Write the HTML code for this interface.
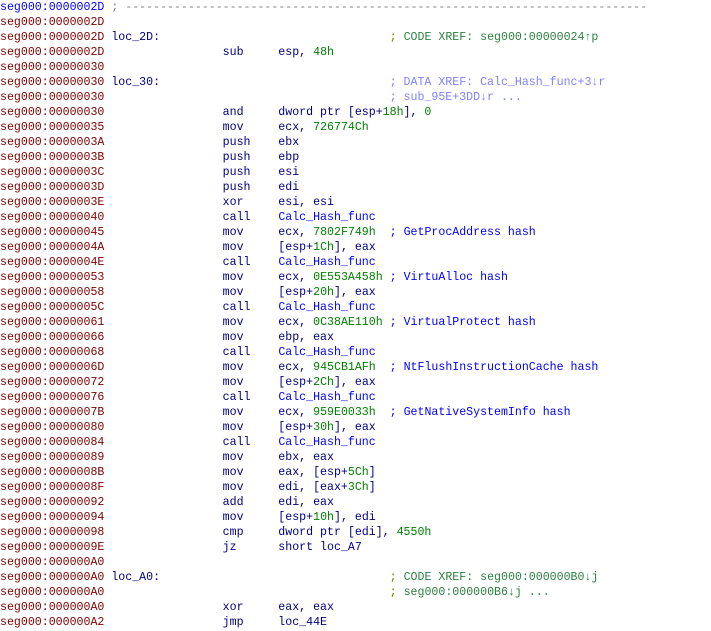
<!DOCTYPE html>
<html><head><meta charset="utf-8"><style>
html,body{margin:0;padding:0;background:#fff;width:711px;height:631px;overflow:hidden}
pre{margin:0;font-family:"Liberation Mono",monospace;font-size:11.6px;line-height:15px;color:#000080;white-space:pre}
.a{color:#800000}.b{color:#0000ff}.n{color:#008000}.f{color:#0000ff}.c{color:#2b8040}.sc{color:#808000}.d{color:#8080ff}.g{color:#808080}.l{color:#000080}
</style></head><body><pre><span class="b">seg000:0000002D</span> <span class="g">; ---------------------------------------------------------------------------</span>
<span class="a">seg000:0000002D</span>
<span class="a">seg000:0000002D</span> loc_2D:                                 <span class="sc">;</span> <span class="c">CODE XREF: seg000:00000024↑p</span>
<span class="a">seg000:0000002D</span>                 sub     esp, <span class="n">48h</span>
<span class="a">seg000:00000030</span>
<span class="a">seg000:00000030</span> loc_30:                                 <span class="d">; DATA XREF: Calc_Hash_func+3↓r</span>
<span class="a">seg000:00000030</span>                                         <span class="d">; sub_95E+3DD↓r ...</span>
<span class="a">seg000:00000030</span>                 and     dword ptr [esp+<span class="n">18h</span>], <span class="n">0</span>
<span class="a">seg000:00000035</span>                 mov     ecx, <span class="n">726774Ch</span>
<span class="a">seg000:0000003A</span>                 push    ebx
<span class="a">seg000:0000003B</span>                 push    ebp
<span class="a">seg000:0000003C</span>                 push    esi
<span class="a">seg000:0000003D</span>                 push    edi
<span class="a">seg000:0000003E</span>                 xor     esi, esi
<span class="a">seg000:00000040</span>                 call    <span class="f">Calc_Hash_func</span>
<span class="a">seg000:00000045</span>                 mov     ecx, <span class="n">7802F749h</span>  <span class="b">; GetProcAddress hash</span>
<span class="a">seg000:0000004A</span>                 mov     [esp+<span class="n">1Ch</span>], eax
<span class="a">seg000:0000004E</span>                 call    <span class="f">Calc_Hash_func</span>
<span class="a">seg000:00000053</span>                 mov     ecx, <span class="n">0E553A458h</span> <span class="b">; VirtuAlloc hash</span>
<span class="a">seg000:00000058</span>                 mov     [esp+<span class="n">20h</span>], eax
<span class="a">seg000:0000005C</span>                 call    <span class="f">Calc_Hash_func</span>
<span class="a">seg000:00000061</span>                 mov     ecx, <span class="n">0C38AE110h</span> <span class="b">; VirtualProtect hash</span>
<span class="a">seg000:00000066</span>                 mov     ebp, eax
<span class="a">seg000:00000068</span>                 call    <span class="f">Calc_Hash_func</span>
<span class="a">seg000:0000006D</span>                 mov     ecx, <span class="n">945CB1AFh</span>  <span class="b">; NtFlushInstructionCache hash</span>
<span class="a">seg000:00000072</span>                 mov     [esp+<span class="n">2Ch</span>], eax
<span class="a">seg000:00000076</span>                 call    <span class="f">Calc_Hash_func</span>
<span class="a">seg000:0000007B</span>                 mov     ecx, <span class="n">959E0033h</span>  <span class="b">; GetNativeSystemInfo hash</span>
<span class="a">seg000:00000080</span>                 mov     [esp+<span class="n">30h</span>], eax
<span class="a">seg000:00000084</span>                 call    <span class="f">Calc_Hash_func</span>
<span class="a">seg000:00000089</span>                 mov     ebx, eax
<span class="a">seg000:0000008B</span>                 mov     eax, [esp+<span class="n">5Ch</span>]
<span class="a">seg000:0000008F</span>                 mov     edi, [eax+<span class="n">3Ch</span>]
<span class="a">seg000:00000092</span>                 add     edi, eax
<span class="a">seg000:00000094</span>                 mov     [esp+<span class="n">10h</span>], edi
<span class="a">seg000:00000098</span>                 cmp     dword ptr [edi], <span class="n">4550h</span>
<span class="a">seg000:0000009E</span>                 jz      short loc_A7
<span class="a">seg000:000000A0</span>
<span class="a">seg000:000000A0</span> loc_A0:                                 <span class="sc">;</span> <span class="c">CODE XREF: seg000:000000B0↓j</span>
<span class="a">seg000:000000A0</span>                                         <span class="sc">;</span> <span class="c">seg000:000000B6↓j ...</span>
<span class="a">seg000:000000A0</span>                 xor     eax, eax
<span class="a">seg000:000000A2</span>                 jmp     loc_44E
</pre></body></html>
